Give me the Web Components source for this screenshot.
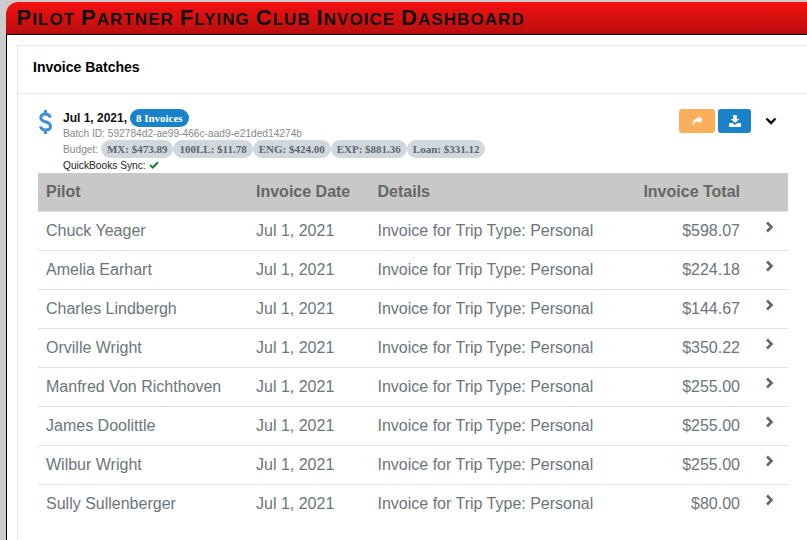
<!DOCTYPE html>
<html>
<head>
<meta charset="utf-8">
<title>Invoice Dashboard</title>
<style>
    html, body { margin: 0; padding: 0; height: 100%; overflow: hidden; }
    body { background: #ccc; font-family: "Liberation Sans", Arial, sans-serif; }
</style>
</head>
<body>
<template id="row-tpl">
    <style>
        :host { display: grid; grid-template-columns: 210px 121.5px 1fr 110px 48px; height: 38px; border-top: 1px solid #dee2e6; color: #6c757d; font-size: 16px; align-items: center; }
        div { padding-left: 8px; }
        .total { text-align: right; padding: 0; }
        .go { display: flex; justify-content: center; padding: 0 0 8px 11px; }
    </style>
    <div><slot></slot></div>
    <div>Jul 1, 2021</div>
    <div>Invoice for Trip Type: Personal</div>
    <div class="total"></div>
    <div class="go"><svg width="9" height="12" viewBox="0 0 9 12"><path d="M2 1.500 6.500 6 2 10.500" fill="none" stroke="#5f6770" stroke-width="2.600"/></svg></div>
</template>

<pilot-dashboard>
    <batch-panel>
        <invoice-row total="$598.07">Chuck Yeager</invoice-row>
        <invoice-row total="$224.18">Amelia Earhart</invoice-row>
        <invoice-row total="$144.67">Charles Lindbergh</invoice-row>
        <invoice-row total="$350.22">Orville Wright</invoice-row>
        <invoice-row total="$255.00">Manfred Von Richthoven</invoice-row>
        <invoice-row total="$255.00">James Doolittle</invoice-row>
        <invoice-row total="$255.00">Wilbur Wright</invoice-row>
        <invoice-row total="$80.00">Sully Sullenberger</invoice-row>
    </batch-panel>
</pilot-dashboard>

<script>
class PilotDashboard extends HTMLElement {
    constructor() {
        super();
        this.attachShadow({ mode: 'open' });
        this.shadowRoot.innerHTML = `
            <style>
                :host { display: block; margin: 2px 0 0 6px; height: 538px; background: #fff; border-radius: 12px 0 0 0; overflow: hidden; }
                h1 {
                    margin: 0; height: 33px; box-sizing: border-box; padding: 3px 0 0 10.5px;
                    background: linear-gradient(#f51010, #b80f0f); border-bottom: 1px solid #000;
                    font: bold 17px/26px "Liberation Sans", Arial, sans-serif; text-transform: uppercase;
                    letter-spacing: 1.06px; color: #111;
                }
                h1 b { font-size: 22px; }
                .body { padding: 10px 0 0 10px; border-left: 1px solid #000; height: 600px; }
            </style>
            <h1><b>P</b>ilot <b>P</b>artner <b>F</b>lying <b>C</b>lub <b>I</b>nvoice <b>D</b>ashboard</h1>
            <div class="body"><slot></slot></div>
        `;
    }
}

class BatchPanel extends HTMLElement {
    constructor() {
        super();
        this.attachShadow({ mode: 'open' });
        this.shadowRoot.innerHTML = `
            <style>
                :host { display: block; border: 1px solid #e6e6e6; border-right: 0; min-height: 540px; font-family: "Liberation Sans", Arial, sans-serif; }
                .title { height: 48px; box-sizing: border-box; padding: 13px 15px; border-bottom: 1px solid #e6e6e6; font-size: 14px; line-height: 17px; font-weight: bold; color: #000; }
                .content { padding: 13px 19px 0 20px; }
                .top { display: flex; height: 66px; }
                .dollar { width: 24px; margin-left: 1px; padding-top: 3px; }
                .info { flex: 1; font-size: 10.2px; color: #888; }
                .info > div { height: 16px; line-height: 16px; white-space: nowrap; }
                .date { font-size: 12px; font-weight: bold; color: #111; }
                .pill { display: inline-block; font-family: "Liberation Serif", serif; font-weight: bold; border-radius: 9px; line-height: 18px; height: 18px; padding: 0 6px; font-size: 11px; }
                .count { background: #1a82c8; color: #fff; }
                .budget { background: #d0d8de; color: #5c6670; }
                .info > .first { height: 17px; padding-top: 2px; }
                .info > .batch { height: 14px; line-height: 15px; }
                .info > .budgets { height: 18px; line-height: 18px; }
                .info > .sync { color: #222; }
                .actions { display: flex; gap: 3px; align-items: flex-start; padding-top: 2px; }
                .btn { height: 24px; border-radius: 3px; display: flex; align-items: center; justify-content: center; }
                .orange { background: #fbae5c; width: 36px; }
                .blue { background: #1a82c8; width: 33px; }
                .chev { margin: 8px 11px 0 11px; }
                .head { display: grid; grid-template-columns: 210px 121.5px 1fr 110px 48px; height: 38px; align-items: center; background: #c8c8c8; color: #666; font-size: 16px; font-weight: bold; }
                .head div { padding-left: 8px; }
                .head .total { text-align: right; padding: 0; }
            </style>
            <div class="title">Invoice Batches</div>
            <div class="content">
                <div class="top">
                    <div class="dollar">
                        <svg width="13" height="24" viewBox="0 0 13 24"><path d="M11.500 7.500C10.500 5 9 4 6.500 4 3.500 4 1.800 5.500 1.800 7.700 1.800 13 11.500 10.500 11.500 16.300 11.500 18.700 9.500 20 6.500 20 4 20 2.200 19 1.300 16.500M6.500 0V4M6.500 20V24" fill="none" stroke="#4290d2" stroke-width="3"/></svg>
                    </div>
                    <div class="info">
                        <div class="first"><span class="date">Jul 1, 2021,</span> <span class="pill count">8 Invoices</span></div>
                        <div class="batch">Batch ID: 592784d2-ae99-466c-aad9-e21ded14274b</div>
                        <div class="budgets">Budget: <span class="pill budget">MX: $473.89</span><span class="pill budget">100LL: $11.78</span><span class="pill budget">ENG: $424.00</span><span class="pill budget">EXP: $881.36</span><span class="pill budget">Loan: $331.12</span></div>
                        <div class="sync">QuickBooks Sync: <svg width="10" height="8" viewBox="0 0 10 8"><path d="M1 4 3.800 6.500 9 1.200" fill="none" stroke="#1a7f3c" stroke-width="2"/></svg></div>
                    </div>
                    <div class="actions">
                        <div class="btn orange"><svg width="11" height="10" viewBox="0 0 11 10"><path d="M6.500 0 11 3.800 6.500 7.500V5.200C3.800 5.200 2 6.500 1.200 10 -.5 5.500 2.500 2.300 6.500 2.300Z" fill="#fff"/></svg></div>
                        <div class="btn blue"><svg width="12" height="12" viewBox="0 0 12 12"><path d="M4.200 0H7.800V4H10.300L6 8 1.700 4H4.200ZM0 8H3.200L6 10 8.800 8H12V12H0Z" fill="#fff"/></svg></div>
                        <svg class="chev" width="12" height="8" viewBox="0 0 12 8"><path d="M1.500 1.500 6 6 10.500 1.500" fill="none" stroke="#000" stroke-width="2.400"/></svg>
                    </div>
                </div>
                <div class="head">
                    <div>Pilot</div><div>Invoice Date</div><div>Details</div><div class="total">Invoice Total</div><div></div>
                </div>
                <slot></slot>
            </div>
        `;
    }
}

class InvoiceRow extends HTMLElement {
    constructor() {
        super();
        this.attachShadow({ mode: 'open' });
        this.shadowRoot.appendChild(document.getElementById('row-tpl').content.cloneNode(true));
        this.shadowRoot.querySelector('.total').textContent = this.getAttribute('total');
    }
}

customElements.define('pilot-dashboard', PilotDashboard);
customElements.define('batch-panel', BatchPanel);
customElements.define('invoice-row', InvoiceRow);
</script>
</body>
</html>
